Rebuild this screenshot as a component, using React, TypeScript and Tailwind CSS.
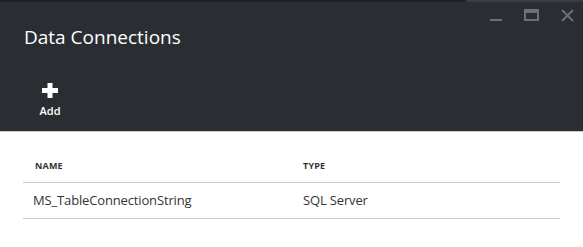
import React from "react";

export default function App() {
  return (
    <div
      className="w-[583px] h-[247px] bg-white overflow-hidden"
      style={{ fontFamily: '"Open Sans", "Noto Sans", sans-serif' }}
    >
      <div className="h-[132px] bg-[#2a2e33] flex flex-col border-b border-[#c9c9c9]">
        <div className="h-[2px] flex">
          <div className="flex-1 bg-[#1e2125]" />
          <div className="w-[117px] bg-[#393d42]" />
        </div>
        <div className="flex justify-end items-start gap-[22px] pr-[9px] pt-[7px] h-[22px]">
          <div className="w-[12px] h-[2px] bg-[#6d7176] mt-[10px]" />
          <div className="w-[15px] h-[12px] border-2 border-t-[4px] border-[#6d7176]" />
          <svg width="13" height="13" viewBox="0 0 13 13">
            <path d="M1 1 L12 12 M12 1 L1 12" stroke="#6d7176" strokeWidth="1.8" />
          </svg>
        </div>
        <div className="pl-[24px] text-white text-[19px] leading-[26px]">Data Connections</div>
        <div className="flex flex-col items-center w-[30px] ml-[35px] mt-[33px]">
          <svg width="16" height="15" viewBox="0 0 16 15">
            <rect x="5.5" y="0" width="5" height="15" fill="#fff" />
            <rect x="0" y="5" width="16" height="5" fill="#fff" />
          </svg>
          <div className="text-white text-[11px] font-semibold leading-[14px] mt-[6px]">Add</div>
        </div>
      </div>
      <div className="mx-[23px] w-[537px] mt-[17px] text-[#333]">
        <div className="flex h-[34px] items-center border-b border-[#cccccc]">
          <div className="w-[268px] pl-[12px] text-[9px] font-bold tracking-[0.2px]">NAME</div>
          <div className="pl-[12px] text-[9px] font-bold tracking-[0.2px]">TYPE</div>
        </div>
        <div className="flex h-[36px] items-center border-b border-[#cccccc]">
          <div className="w-[268px] pl-[10px] text-[13px] tracking-[-0.15px]">MS_TableConnectionString</div>
          <div className="pl-[12px] text-[13px] tracking-[-0.15px]">SQL Server</div>
        </div>
      </div>
    </div>
  );
}
